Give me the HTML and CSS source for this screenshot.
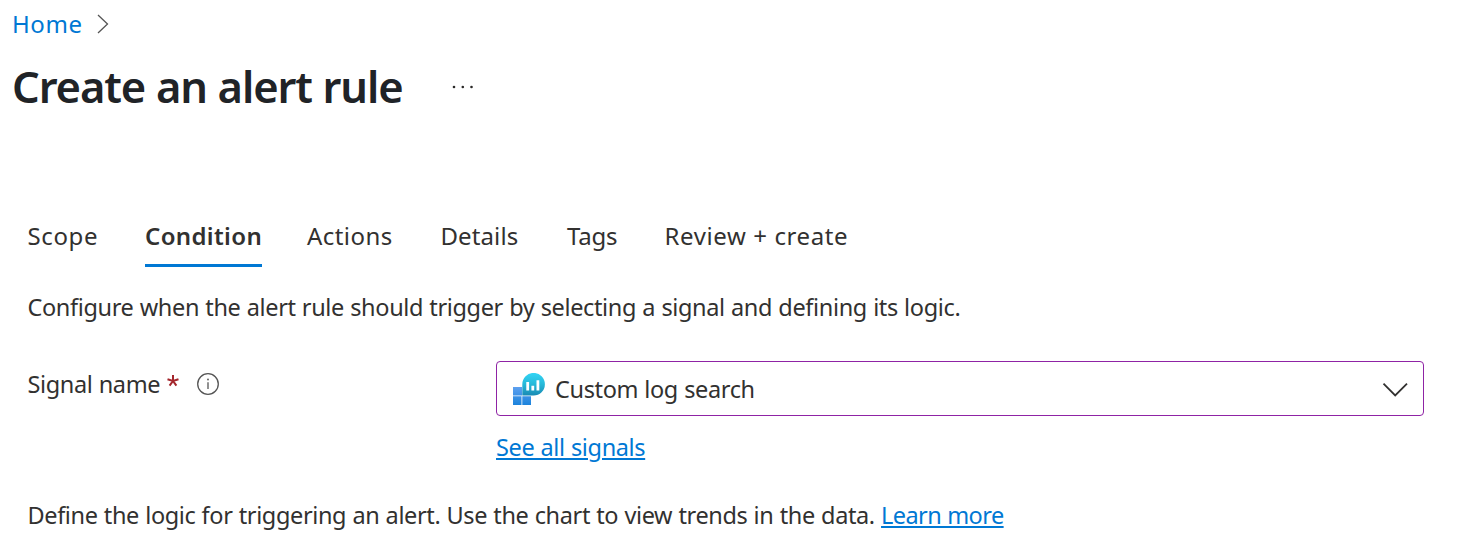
FILE: index.html
```html
<!DOCTYPE html>
<html lang="en">
<head>
<meta charset="utf-8">
<title>Create an alert rule</title>
<link rel="stylesheet" href="styles.css">
</head>
<body>
<header class="page-header">
  <nav class="breadcrumb">
    <a class="crumb" href="#">Home</a>
    <svg class="crumb-arrow" width="12" height="20" viewBox="0 0 12 20" fill="none" stroke="#555" stroke-width="1.3"><path d="M1 1l9.500 9L1 19"/></svg>
  </nav>
  <div class="title-row">
    <h1 class="title">Create an alert rule</h1>
    <svg class="more" width="22" height="4" viewBox="0 0 22 4" fill="#292827"><circle cx="2" cy="2" r="1.3"/><circle cx="10.800" cy="2" r="1.3"/><circle cx="19.500" cy="2" r="1.3"/></svg>
  </div>
</header>
<main class="content">
  <nav class="tabs">
    <a class="tab tab-scope">Scope</a>
    <a class="tab tab-active">Condition</a>
    <a class="tab tab-actions">Actions</a>
    <a class="tab tab-details">Details</a>
    <a class="tab tab-tags">Tags</a>
    <a class="tab tab-review">Review + create</a>
  </nav>
  <p class="intro">Configure when the alert rule should trigger by selecting a signal and defining its logic.</p>
  <div class="field">
    <div class="label-group">
      <label class="label">Signal name</label>
      <svg class="required" width="12" height="12" viewBox="0 0 12 12" fill="none" stroke="#a4262c" stroke-width="2"><path d="M6 0v6M.5 4.200L6 6l5.500-1.800M2.600 10.700L6 6l3.400 4.700"/></svg>
      <svg class="info" width="24" height="24" viewBox="0 0 24 24" fill="none" stroke="#555" stroke-width="1.3"><circle cx="12" cy="12" r="10.300"/><path d="M12 10.200V17"/><circle cx="12" cy="7.500" r=".9" fill="#555" stroke="none"/></svg>
    </div>
    <div class="control">
      <div class="select">
        <svg class="signal-icon" width="32" height="32" viewBox="0 0 32 32">
          <defs>
            <linearGradient id="bubble" x1="0" y1="0" x2="0" y2="1"><stop offset="0" stop-color="#32d4f5"/><stop offset=".5" stop-color="#27b9d9"/><stop offset="1" stop-color="#198ab3"/></linearGradient>
            <linearGradient id="tiles" x1="0" y1="14" x2="0" y2="32" gradientUnits="userSpaceOnUse"><stop offset="0" stop-color="#5ea0ef"/><stop offset="1" stop-color="#1b83dc"/></linearGradient>
          </defs>
          <path fill="url(#tiles)" d="M0 14h9v8.500H0zM0 23.300h8.500V32H0zM9.300 23.300H18V32H9.300z"/>
          <path fill="url(#bubble)" d="M9.300 22.500V11.200A11.300 11.300 0 1 1 20.600 22.500z"/>
          <path fill="#fff" d="M13.300 9h2.800v8.500h-2.800zM18.400 12.700h2.800v4.800h-2.800zM23.500 7.200h2.800v10.300h-2.800z"/>
        </svg>
        <span class="value">Custom log search</span>
        <svg class="chevron" width="26" height="15" viewBox="0 0 26 15" fill="none" stroke="#323130" stroke-width="1.800"><path d="M1.500 1.700l11.700 11.700L25 1.700"/></svg>
      </div>
      <a class="link all-signals" href="#">See all signals</a>
    </div>
  </div>
  <p class="logic"><span class="logic-text">Define the logic for triggering an alert. Use the chart to view trends in the data.</span> <a class="link learn" href="#">Learn more</a></p>
</main>
</body>
</html>
```
FILE: styles.css
```css
body {
  margin: 0;
  background: #fff;
  color: #323130;
  font: 23.5px/32px "Noto Sans", "Open Sans", sans-serif;
  letter-spacing: -0.37px;
  word-spacing: 0.5px;
  white-space: nowrap;
}
p, h1 { margin: 0; }
a { color: inherit; text-decoration: none; }
svg { display: block; flex: none; }
.page-header { padding: 8px 13px 0 12px; }
.breadcrumb { display: flex; align-items: center; gap: 15px; }
.crumb { color: #0078d4; font-size: 24px; letter-spacing: 0.55px; }
.title-row { display: flex; align-items: center; gap: 49.5px; padding-top: 16px; }
.title { font-size: 43.5px; line-height: 60px; font-weight: 600; letter-spacing: -1.1px; color: #202327; }
.more { margin-top: 2px; }
.content { padding: 104px 41px 0 27.5px; }
.tabs { display: flex; height: 47px; font-size: 24px; letter-spacing: 0.45px; word-spacing: 0; }
.tab { height: 44px; }
.tab-scope { width: 117.5px; letter-spacing: 0.6px; }
.tab-active { width: 117px; margin-right: 45px; font-weight: 600; letter-spacing: 0.35px; border-bottom: 3px solid #0078d4; }
.tab-actions { width: 133.5px; }
.tab-details { width: 126.5px; letter-spacing: 0.1px; }
.tab-tags { width: 97.5px; letter-spacing: -0.2px; }
.tab-review { letter-spacing: 0.6px; }
.intro { padding-top: 25px; line-height: 31px; letter-spacing: -0.36px; }
.field { display: flex; padding-top: 38px; }
.label-group { display: flex; align-items: center; width: 468.5px; height: 32px; padding-top: 7px; }
.required { margin: -6px 0 0 7px; }
.info { margin-left: 17px; }
.control { flex: 1; }
.select {
  display: flex;
  align-items: center;
  height: 53px;
  padding: 0 15px 0 16px;
  border: 1px solid #8f23a5;
  border-radius: 4px;
}
.value { margin-left: 10px; padding-top: 1px; }
.chevron { margin-left: auto; margin-top: 1px; }
.all-signals { display: block; width: max-content; margin-top: 15px; }
.link { color: #0078d4; text-decoration: underline; text-decoration-thickness: 2px; text-underline-offset: 2px; }
.logic { padding-top: 36px; letter-spacing: -0.375px; }
.learn { letter-spacing: -0.57px; }
```
